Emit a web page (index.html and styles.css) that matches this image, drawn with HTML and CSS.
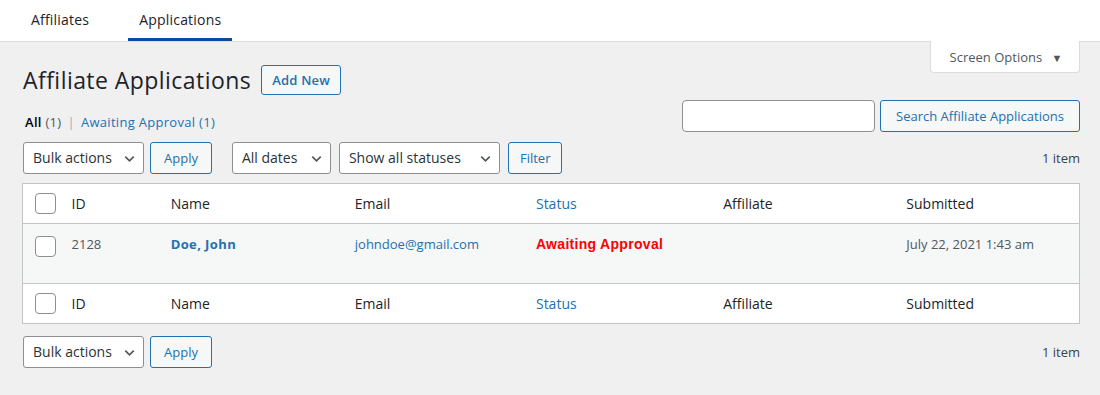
FILE: index.html
```html
<!DOCTYPE html>
<html lang="en">
<head>
<meta charset="utf-8">
<title>Affiliate Applications</title>
<link rel="stylesheet" href="styles.css">
</head>
<body>
<nav class="tabs">
  <a class="tab">Affiliates</a>
  <a class="tab active">Applications</a>
</nav>
<div class="screen-meta">
  <button class="screen-options">Screen Options <span class="arrow">▼</span></button>
</div>
<main class="wrap">
  <div class="top">
    <div class="top-left">
      <div class="heading">
        <h1>Affiliate Applications</h1>
        <button class="btn add-new">Add New</button>
      </div>
      <ul class="subsub">
        <li class="current">All <span class="count">(1)</span></li>
        <li class="sep">|</li>
        <li><a>Awaiting Approval <span class="count-link">(1)</span></a></li>
      </ul>
    </div>
    <div class="search">
      <input class="search-input" type="text">
      <button class="btn">Search Affiliate Applications</button>
    </div>
  </div>
  <div class="tablenav">
    <div class="actions">
      <div class="select w-bulk">Bulk actions<svg class="chev" viewBox="0 0 16 16"><path d="M3.5 6l4.5 4.5L12.5 6" fill="none" stroke="#50575e" stroke-width="1.8"/></svg></div>
      <button class="btn btn-apply">Apply</button>
    </div>
    <div class="actions">
      <div class="select w-dates">All dates<svg class="chev" viewBox="0 0 16 16"><path d="M3.5 6l4.5 4.5L12.5 6" fill="none" stroke="#50575e" stroke-width="1.8"/></svg></div>
      <div class="select w-status">Show all statuses<svg class="chev" viewBox="0 0 16 16"><path d="M3.5 6l4.5 4.5L12.5 6" fill="none" stroke="#50575e" stroke-width="1.8"/></svg></div>
      <button class="btn btn-filter">Filter</button>
    </div>
    <span class="items">1 item</span>
  </div>
  <table class="list">
    <colgroup>
      <col class="c-cb"><col class="c-id"><col class="c-name"><col class="c-email"><col class="c-status"><col class="c-aff"><col class="c-sub">
    </colgroup>
    <thead>
      <tr><td class="cb"><span class="checkbox"></span></td><th>ID</th><th>Name</th><th>Email</th><th class="sortable">Status</th><th>Affiliate</th><th>Submitted</th></tr>
    </thead>
    <tbody>
      <tr class="row"><td class="cb"><span class="checkbox"></span></td><td>2128</td><td><a class="name">Doe, John</a></td><td><a class="email">johndoe@gmail.com</a></td><td><span class="pending">Awaiting Approval</span></td><td></td><td>July 22, 2021 1:43 am</td></tr>
    </tbody>
    <tfoot>
      <tr><td class="cb"><span class="checkbox"></span></td><th>ID</th><th>Name</th><th>Email</th><th class="sortable">Status</th><th>Affiliate</th><th>Submitted</th></tr>
    </tfoot>
  </table>
  <div class="tablenav bottom">
    <div class="actions">
      <div class="select w-bulk">Bulk actions<svg class="chev" viewBox="0 0 16 16"><path d="M3.5 6l4.5 4.5L12.5 6" fill="none" stroke="#50575e" stroke-width="1.8"/></svg></div>
      <button class="btn btn-apply">Apply</button>
    </div>
    <span class="items">1 item</span>
  </div>
</main>
</body>
</html>
```
FILE: styles.css
```css
* { box-sizing: border-box; }
html, body { margin: 0; padding: 0; }
body {
  background: #f0f0f1;
  font-family: "Open Sans", "Noto Sans", sans-serif;
  font-size: 13px;
  color: #3c434a;
  width: 1100px;
  height: 395px;
  overflow: hidden;
}
a { color: #2271b1; text-decoration: none; }
.tabs {
  background: #fff;
  height: 42px;
  border-bottom: 1px solid #dcdcde;
  display: flex;
  padding-left: 20px;
}
.tab {
  color: #1d2327;
  font-size: 14px;
  padding: 10px 11px 0;
  height: 41px;
  line-height: 19px;
  letter-spacing: 0.2px;
}
.tab.active {
  padding: 10px 11px 0;
  margin-left: 28px;
  border-bottom: 3px solid #0a4ba0;
}
.screen-meta {
  display: flex;
  justify-content: flex-end;
  padding-right: 20px;
  height: 0;
  position: relative;
  z-index: 1;
}
.screen-options {
  font-family: inherit;
  width: 150px;
  height: 32px;
  margin-top: -1px;
  background: #fff;
  border: 1px solid #dcdcde;
  border-top: none;
  border-radius: 0 0 4px 4px;
  color: #50575e;
  font-size: 13px;
  padding: 0 0 0 2px;
}
.screen-options .arrow { font-size: 11px; margin-left: 6px; color: #50575e; }
.wrap { padding: 0 20px 0 22px; }
.top { display: flex; justify-content: space-between; align-items: flex-end; }
.heading { display: flex; align-items: center; gap: 10px; padding-top: 23px; }
h1 {
  margin: 0;
  font-size: 23px;
  font-weight: 400;
  color: #1d2327;
  line-height: 30px;
  padding-left: 1px;
  letter-spacing: 0.45px;
}
.btn {
  font-family: inherit;
  font-size: 13px;
  height: 32px;
  line-height: 30px;
  padding: 0 10px;
  color: #2271b1;
  border: 1px solid #2271b1;
  background: #f6f7f7;
  border-radius: 3px;
  white-space: nowrap;
}
.btn-apply { padding: 0 13px; }
.btn-filter { padding: 0 11px; }
.add-new { height: 30px; line-height: 28px; font-weight: 600; padding: 0 10px; letter-spacing: 0.2px; }
.subsub {
  list-style: none;
  margin: 18px 0 0;
  padding: 0 0 0 3px;
  display: flex;
  gap: 6px;
  font-size: 13px;
  line-height: 18px;
  color: #646970;
  letter-spacing: 0.3px;
}
.subsub .current { color: #000; font-weight: 600; }
.subsub .count { color: #50575e; font-weight: 400; }
.subsub .sep { color: #a7aaad; }
.search { display: flex; gap: 5px; margin-bottom: -1px; }
.search-input {
  width: 193px;
  height: 32px;
  border: 1px solid #8c8f94;
  border-radius: 4px;
  background: #fff;
}
.search .btn { width: 200px; }
.tablenav {
  display: flex;
  align-items: center;
  gap: 20px;
  margin-top: 11px;
  height: 32px;
}
.tablenav .actions { display: flex; gap: 6px; align-items: center; }
.tablenav .actions + .actions { gap: 8px; }
.tablenav .actions:first-child { margin-left: 1px; }
.items { margin-left: auto; color: #3c434a; font-size: 13px; }
.select {
  height: 32px;
  border: 1px solid #8c8f94;
  border-radius: 3px;
  background: #fff;
  color: #2c3338;
  font-size: 14px;
  line-height: 30px;
  padding-left: 9px;
  display: flex;
  align-items: center;
  justify-content: space-between;
  padding-right: 6px;
}
.chev { width: 15px; height: 15px; }
.w-bulk { width: 121px; }
.w-dates { width: 99px; }
.w-status { width: 161px; }
.list {
  margin-top: 9px;
  width: 1058px;
  border-collapse: collapse;
  table-layout: fixed;
  background: #fff;
  border: 1px solid #c3c4c7;
}
.c-cb { width: 39px; }
.c-id { width: 99px; }
.c-name { width: 184px; }
.c-email { width: 181px; }
.c-status { width: 187px; }
.c-aff { width: 183px; }
.c-sub { width: 183px; }
th, td {
  text-align: left;
  padding: 0 10px;
  font-weight: 400;
  vertical-align: middle;
}
thead th, tfoot th { font-size: 14px; color: #1d2327; height: 40px; }
thead tr { border-bottom: 1px solid #c3c4c7; }
tfoot tr { border-top: 1px solid #c3c4c7; }
th.sortable { color: #2271b1; }
td.cb { padding: 0 0 0 12px; }
.checkbox {
  display: block;
  width: 21px;
  height: 21px;
  border: 1px solid #8c8f94;
  border-radius: 4px;
  background: #fff;
}
.row { background: #f6f7f7; height: 60px; }
.row td { vertical-align: top; padding-top: 11px; color: #50575e; font-size: 13px; line-height: 18px; }
.row td.cb { padding-top: 12px; }
.name { font-weight: 700; letter-spacing: 0.4px; }
.pending { color: #ff0000; font-weight: 700; font-size: 14px; letter-spacing: 0.3px; font-family: "Liberation Sans", Arial, sans-serif; }
.tablenav.bottom { margin-top: 12px; }
```
